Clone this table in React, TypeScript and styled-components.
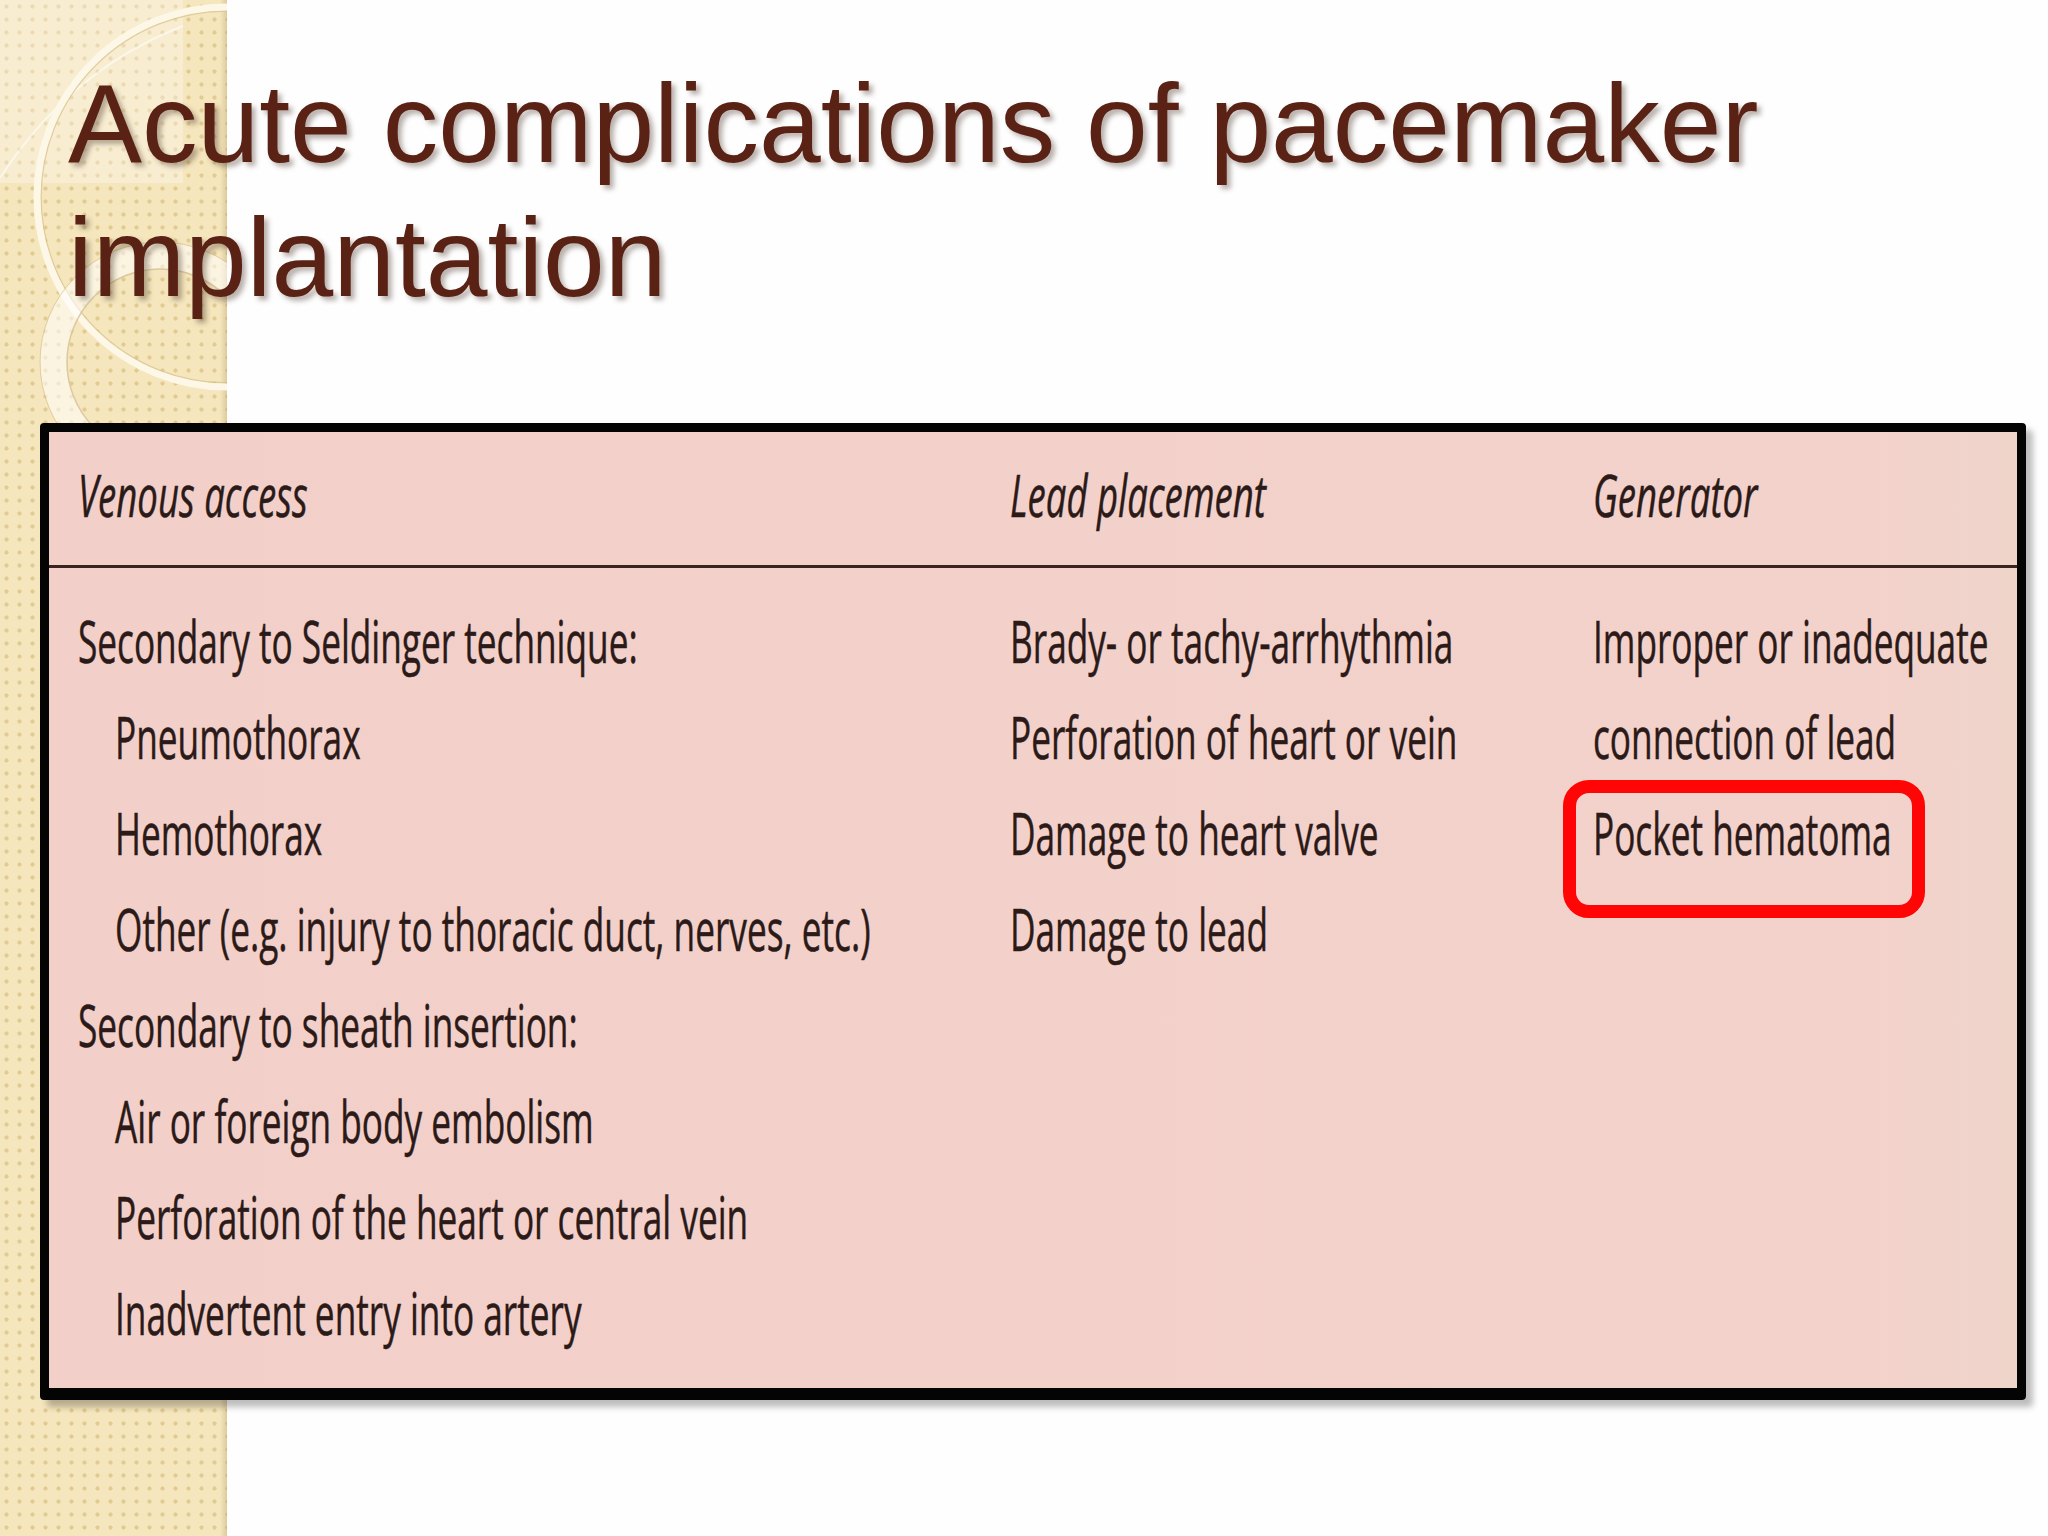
import React from "react";
import styled, { createGlobalStyle } from "styled-components";

const GlobalStyle = createGlobalStyle`
  html, body { margin: 0; padding: 0; background: #fefefe; }
  #root { width: 2048px; height: 1536px; }
`;

const Slide = styled.div`
  position: relative;
  width: 2048px;
  height: 1536px;
  overflow: hidden;
  box-sizing: border-box;
  padding: 57px 0 0 40px;
  background: #fefefe;
  display: flex;
  flex-direction: column;
`;

const SidePanel = styled.div`
  position: absolute;
  left: 0;
  top: 0;
  width: 227px;
  height: 1536px;
  z-index: 0;
  background-color: #efdcaa;
  background-image:
    linear-gradient(to left, rgba(170, 140, 80, 0.3), rgba(170, 140, 80, 0) 7px),
    radial-gradient(circle at 50% 50%, #e2cb92 0 1.8px, rgba(0, 0, 0, 0) 2.4px),
    linear-gradient(#f5e6bd, #f5e6bd);
  background-size: 100% 100%, 13px 13px, 9px 9px;
  background-position: 0 0, 0 0, 2px 2px;
  background-repeat: no-repeat, repeat, repeat;
`;

const Ornament = styled.svg`
  position: absolute;
  left: 0;
  top: 0;
  width: 227px;
  height: 1536px;
`;

const Title = styled.h1`
  position: relative;
  z-index: 1;
  margin: 0 0 0 28px;
  font-family: "Liberation Sans", Arial, sans-serif;
  font-weight: 400;
  font-size: 111px;
  line-height: 134px;
  color: #5a2214;
  text-shadow: 4px 4px 5px rgba(70, 50, 40, 0.38);
`;

const Table = styled.div`
  position: relative;
  z-index: 1;
  margin-top: 98px;
  width: 1986px;
  box-sizing: border-box;
  border: 9px solid #050404;
  border-bottom-width: 12px;
  border-radius: 4px;
  background: linear-gradient(to right, #f2d0c9 0%, #f3d2cb 92%, #efd4ca 100%);
  box-shadow: 7px 7px 6px rgba(0, 0, 0, 0.26);
`;

const Grid = styled.div<{ $head?: boolean }>`
  display: grid;
  grid-template-columns: 932px 583px minmax(0, 1fr);
  padding: ${(p) => (p.$head ? "15px 0 22px 29px" : "25px 0 27px 29px")};
  border-bottom: ${(p) => (p.$head ? "3px solid #3a2420" : "none")};
`;

const Column = styled.div`
  display: flex;
  flex-direction: column;
  min-width: 0;
`;

const Line = styled.div<{ $indent?: boolean; $italic?: boolean; $mark?: boolean }>`
  position: relative;
  height: 96px;
  line-height: 96px;
  padding-left: ${(p) => (p.$indent ? "37px" : "0")};
  font-family: "Open Sans", "Noto Sans", sans-serif;
  font-size: 58px;
  font-style: ${(p) => (p.$italic ? "italic" : "normal")};
  color: #2b1a18;
  -webkit-text-stroke: 0.5px #2b1a18;
  white-space: nowrap;
  ${(p) =>
    p.$mark
      ? `&::after {
    content: "";
    position: absolute;
    left: -30px;
    top: -5px;
    width: 362px;
    height: 138px;
    box-sizing: border-box;
    border: 13px solid #ff0505;
    border-radius: 26px;
  }`
      : ""}
`;

const Squeeze = styled.span<{ $wide?: boolean }>`
  display: inline-block;
  transform: scaleX(${(p) => (p.$wide ? 0.63 : 0.607)});
  transform-origin: 0 50%;
`;

type Entry = { text: string; indent?: boolean; mark?: boolean };

const venous: Entry[] = [
  { text: "Secondary to Seldinger technique:" },
  { text: "Pneumothorax", indent: true },
  { text: "Hemothorax", indent: true },
  { text: "Other (e.g. injury to thoracic duct, nerves, etc.)", indent: true },
  { text: "Secondary to sheath insertion:" },
  { text: "Air or foreign body embolism", indent: true },
  { text: "Perforation of the heart or central vein", indent: true },
  { text: "Inadvertent entry into artery", indent: true },
];

const lead: Entry[] = [
  { text: "Brady- or tachy-arrhythmia" },
  { text: "Perforation of heart or vein" },
  { text: "Damage to heart valve" },
  { text: "Damage to lead" },
];

const generator: Entry[] = [
  { text: "Improper or inadequate" },
  { text: "connection of lead" },
  { text: "Pocket hematoma", mark: true },
];

const headings = ["Venous access", "Lead placement", "Generator"];

const renderColumn = (items: Entry[]) => (
  <Column>
    {items.map((e) => (
      <Line key={e.text} $indent={e.indent} $mark={e.mark}>
        <Squeeze>{e.text}</Squeeze>
      </Line>
    ))}
  </Column>
);

export default function App() {
  return (
    <>
      <GlobalStyle />
      <Slide>
        <SidePanel>
          <Ornament viewBox="0 0 227 1536">
            <rect x="0" y="0" width="183" height="183" fill="rgba(255,255,255,0.3)" />
            <path d="M183 26 Q70 70 0 178" fill="none" stroke="rgba(255,255,255,0.55)" strokeWidth="2" />
            <circle cx="227" cy="197" r="186" fill="none" stroke="#d6c08a" strokeWidth="1.5" opacity="0.7" />
            <circle cx="227" cy="197" r="190" fill="none" stroke="#fcf7e6" strokeWidth="7" />
            <circle cx="160" cy="362" r="106" fill="none" stroke="rgba(255,255,255,0.55)" strokeWidth="27" />
            <circle cx="160" cy="362" r="120" fill="none" stroke="#d3bd88" strokeWidth="1" opacity="0.6" />
            <circle cx="160" cy="362" r="93" fill="none" stroke="#cdb784" strokeWidth="1.5" opacity="0.7" />
          </Ornament>
        </SidePanel>
        <Title>
          Acute complications of pacemaker
          <br />
          implantation
        </Title>
        <Table>
          <Grid $head>
            {headings.map((h) => (
              <Line key={h} $italic>
                <Squeeze $wide>{h}</Squeeze>
              </Line>
            ))}
          </Grid>
          <Grid>
            {renderColumn(venous)}
            {renderColumn(lead)}
            {renderColumn(generator)}
          </Grid>
        </Table>
      </Slide>
    </>
  );
}
